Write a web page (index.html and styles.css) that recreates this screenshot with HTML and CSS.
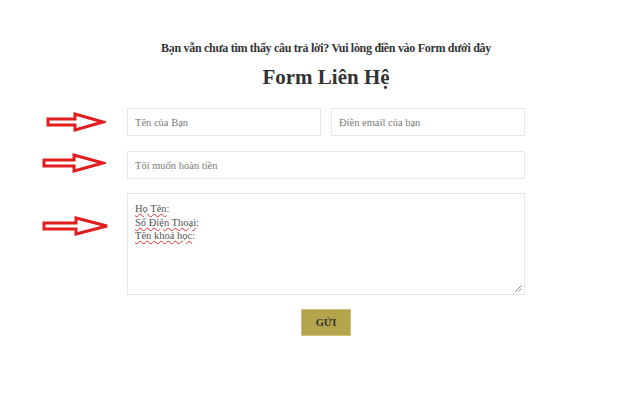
FILE: index.html
```html
<!DOCTYPE html>
<html>
<head>
	<meta charset="utf-8">
	<title>Form Liên Hệ</title>
	<link rel="stylesheet" href="styles.css">
</head>
<body>
	<div id="contact">
		<p class="sub">Bạn vẫn chưa tìm thấy câu trả lời? Vui lòng điền vào Form dưới đây</p>
		<h2 class="title">Form Liên Hệ</h2>
		<form class="form">
			<div class="row">
				<input type="text" class="field" placeholder="Tên của Bạn">
				<input type="text" class="field" placeholder="Điền email của bạn">
			</div>
			<div class="row">
				<input type="text" class="field" placeholder="Tôi muốn hoàn tiền">
			</div>
			<div class="area">
				<span class="typo">Họ Tên</span>:<br>
				<span class="typo">Số Điện Thoại</span>:<br>
				<span class="typo">Tên khoá học</span>:
				<svg class="grip" width="7" height="7" viewBox="0 0 7 7"><path d="M6.5 0.5 L0.5 6.5 M6.5 3.5 L3.5 6.5" stroke="#888" stroke-width="1"/></svg>
			</div>
			<div class="send"><a href="javascript:;" class="btn">GỬI</a></div>
		</form>

		<svg class="arrow a1" width="60" height="20" viewBox="0 0 60 20"><path d="M2 7 H29 V2 L57 10 L29 18 V13 H2 Z" fill="none" stroke="#e21d1d" stroke-width="3"/></svg>
		<svg class="arrow a2" width="64" height="20" viewBox="0 0 64 20"><path d="M2 7 H32 V2 L61 10 L32 18 V13 H2 Z" fill="none" stroke="#e21d1d" stroke-width="3"/></svg>
		<svg class="arrow a3" width="68" height="20" viewBox="0 0 68 20"><path d="M2 7 H34 V2 L65 10 L34 18 V13 H2 Z" fill="none" stroke="#e21d1d" stroke-width="3"/></svg>
	</div>
</body>
</html>
```
FILE: styles.css
```css
* { margin: 0; padding: 0; box-sizing: border-box; }
body { background: #fff; font-family: "Liberation Serif", "DejaVu Serif", serif; color: #333; }
#contact { position: relative; width: 624px; height: 401px; padding-top: 40px; }
.sub { text-align: center; font-size: 12px; letter-spacing: -0.3px; font-weight: bold; color: #333; padding-left: 28px; line-height: 17px; }
.title { text-align: center; font-size: 21px; font-weight: bold; color: #333; padding-left: 28px; margin-top: 6px; line-height: 28px; }
.form { width: 398px; margin: 17px 0 0 127px; display: flex; flex-direction: column; }
.row { display: flex; gap: 10px; margin-bottom: 15px; }
.field { flex: 1; height: 28px; border: 1px solid #e6e6e6; padding: 0 7px; font-family: inherit; font-size: 10.5px; color: #555; outline: none; }
.field::placeholder { color: #7a7a7a; }
.area { position: relative; height: 102px; margin-top: -1px; border: 1px solid #e6e6e6; padding: 8px 7px; font-size: 10.5px; line-height: 13.5px; color: #555; }
.typo { text-decoration: underline wavy #e03030; text-decoration-thickness: 1px; text-underline-offset: 1px; }
.grip { position: absolute; right: 2px; bottom: 2px; }
.send { display: flex; justify-content: center; margin-top: 14px; }
.btn { display: block; width: 50px; height: 27px; line-height: 25px; text-align: center; background: #b4a54c; border: 1px solid #d0c27a; color: #333; font-size: 10.5px; font-weight: bold; text-decoration: none; }
.arrow { position: absolute; }
.a1 { left: 46px; top: 112px; }
.a2 { left: 42px; top: 153px; }
.a3 { left: 42px; top: 216px; }
```
